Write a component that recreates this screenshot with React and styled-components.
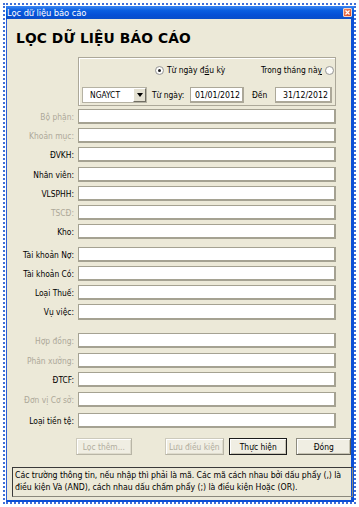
import React from 'react';
import styled, { createGlobalStyle } from 'styled-components';

const Global = createGlobalStyle`
  html, body { margin: 0; padding: 0; background: #ffffff; }
  body {
    font-family: "DejaVu Sans Condensed", "DejaVu Sans", sans-serif;
    font-size: 8.4px;
    color: #000;
  }
  #root { width: 359px; height: 507px; overflow: hidden; }
`;

const Frame = styled.div`
  margin: 3px 0 0 3px;
  width: 353px;
  height: 501px;
  box-sizing: border-box;
  border: 2px dotted #3f70d8;
  padding: 1px 0 0 1px;
  display: flex;
  flex-direction: column;
`;

const TitleBar = styled.div`
  height: 13px;
  flex: none;
  display: flex;
  align-items: center;
  justify-content: space-between;
  padding: 0 2px 0 1px;
  background: linear-gradient(to bottom, #3b86f3 0%, #0a5ee0 35%, #0550d6 70%, #0a4ec8 100%);
  color: #fff;
  font-family: "DejaVu Sans Condensed", "DejaVu Sans", sans-serif;
  font-size: 9.3px;
  letter-spacing: -0.1px;
`;

const CloseBox = styled.div`
  width: 9px;
  height: 9px;
  box-sizing: border-box;
  border: 1px solid #f3d2c4;
  border-radius: 1px;
  background: linear-gradient(135deg, #f08a66, #d9451c);
  display: flex;
  align-items: center;
  justify-content: center;
`;

const Body = styled.div`
  flex: 1;
  background: #ece9d8;
  border-left: 1px solid #2b5fd6;
  border-right: 3px solid #0b4fd6;
  border-bottom: 2px solid #0b4fd6;
  display: flex;
  flex-direction: column;
  padding: 11px 0 0 0;
`;

const Heading = styled.div`
  margin-left: 9px;
  font-family: "DejaVu Sans", sans-serif;
  font-weight: bold;
  font-size: 13.8px;
  line-height: 16px;
  letter-spacing: 0.1px;
`;

const GroupBox = styled.div`
  margin: 11px 0 0 71px;
  width: 258px;
  height: 49px;
  box-sizing: border-box;
  border: 1px solid #aca899;
  box-shadow: inset 1px 1px 0 #ffffff;
  padding: 6px 1px 0 3px;
  display: flex;
  flex-direction: column;
`;

const RadioRow = styled.div`
  display: flex;
  align-items: center;
  height: 12px;
  padding-left: 73px;
`;

const RadioItem = styled.label`
  display: flex;
  align-items: center;
  gap: 3px;
  margin-left: ${p => (p.$right ? 'auto' : '0')};
`;

const RadioDot = styled.span`
  width: 9px;
  height: 9px;
  box-sizing: border-box;
  border-radius: 50%;
  border: 1px solid #9a9a9a;
  background: radial-gradient(circle, #ffffff 50%, #e6e4dc 100%);
  display: flex;
  align-items: center;
  justify-content: center;
  &::after {
    content: '';
    width: 3px;
    height: 3px;
    border-radius: 50%;
    background: ${p => (p.$checked ? '#222' : 'transparent')};
  }
`;

const U = styled.span`
  text-decoration: underline;
`;

const DateRow = styled.div`
  display: flex;
  align-items: center;
  margin-top: 11px;
  height: 16px;
`;

const Select = styled.div`
  width: 65px;
  height: 16px;
  box-sizing: border-box;
  background: #fff;
  border: 1px solid #b5b2a3;
  display: flex;
  align-items: center;
  justify-content: space-between;
  padding-left: 7px;
`;

const DropBtn = styled.div`
  width: 13px;
  height: 14px;
  box-sizing: border-box;
  background: #e4e1d2;
  border-left: 1px solid #fff;
  border-top: 1px solid #fff;
  border-right: 1px solid #716f64;
  border-bottom: 1px solid #716f64;
  display: flex;
  align-items: center;
  justify-content: center;
  &::after {
    content: '';
    border-left: 3px solid transparent;
    border-right: 3px solid transparent;
    border-top: 4px solid #000;
  }
`;

const InlineLabel = styled.span`
  width: ${p => p.$w}px;
  margin-left: ${p => p.$ml}px;
  white-space: nowrap;
`;

const DateBox = styled.div`
  width: ${p => p.$w}px;
  height: 16px;
  box-sizing: border-box;
  background: #fff;
  border: 1px solid #aca899;
  border-right-width: 2px;
  border-bottom-width: 2px;
  display: flex;
  align-items: center;
  justify-content: flex-end;
  padding-right: 2px;
  font-size: 8.7px;
`;

const Fields = styled.div`
  display: flex;
  flex-direction: column;
  margin-top: 3px;
`;

const FieldRow = styled.div`
  display: flex;
  align-items: center;
  margin-top: ${p => p.$mt}px;
`;

const FieldLabel = styled.span`
  width: 67px;
  margin-right: 4px;
  text-align: right;
  white-space: nowrap;
  color: ${p => (p.$disabled ? '#aca899' : '#000')};
`;

const TextBox = styled.div`
  width: 258px;
  height: ${p => p.$h}px;
  box-sizing: border-box;
  background: #fff;
  border: 1px solid #a5a292;
  border-right-width: 2px;
  border-bottom-width: 2px;
`;

const ButtonRow = styled.div`
  display: flex;
  margin-top: 10px;
  padding-left: 69px;
`;

const Button = styled.div`
  width: ${p => p.$w}px;
  margin-left: ${p => p.$ml}px;
  height: 17px;
  box-sizing: border-box;
  display: flex;
  align-items: center;
  justify-content: center;
  background: #f0eee3;
  color: ${p => (p.$disabled ? '#b0ad9e' : '#000')};
  border: 1px solid ${p => (p.$primary ? '#1c1c1c' : p.$disabled ? '#cdcabc' : '#8e8c80')};
  border-right-color: ${p => (p.$primary ? '#1c1c1c' : p.$disabled ? '#b8b5a6' : '#5e5c52')};
  border-bottom-color: ${p => (p.$primary ? '#1c1c1c' : p.$disabled ? '#b8b5a6' : '#5e5c52')};
  box-shadow: inset 1px 1px 0 #ffffff, inset -1px -1px 0 ${p => (p.$disabled ? '#dedbcc' : '#c6c3b3')};
  white-space: nowrap;
`;

const Note = styled.div`
  margin: 12px 0 0 5px;
  width: 341px;
  height: 30px;
  box-sizing: border-box;
  border: 1px solid #3a3a3a;
  border-right-color: #8a887c;
  border-bottom-color: #8a887c;
  padding: 2px 0 0 2px;
  line-height: 11.5px;
  white-space: nowrap;
  font-size: 8.7px;
  letter-spacing: -0.05px;
`;

const fields = [
  { label: 'Bộ phận:', disabled: true, mt: 0 },
  { label: 'Khoản mục:', disabled: true, mt: 4 },
  { label: 'ĐVKH:', mt: 4 },
  { label: 'Nhân viên:', mt: 5 },
  { label: 'VLSPHH:', mt: 4 },
  { label: 'TSCĐ:', disabled: true, mt: 4 },
  { label: 'Kho:', mt: 4 },
  { label: 'Tài khoản Nợ:', mt: 8 },
  { label: 'Tài khoản Có:', mt: 4 },
  { label: 'Loại Thuế:', mt: 4 },
  { label: 'Vụ việc:', mt: 4, h: 16 },
  { label: 'Hợp đồng:', disabled: true, mt: 13 },
  { label: 'Phân xưởng:', disabled: true, mt: 5 },
  { label: 'ĐTCF:', mt: 4 },
  { label: 'Đơn vị Cơ sở:', disabled: true, mt: 5 },
  { label: 'Loại tiền tệ:', mt: 6 },
];

export default function App() {
  return (
    <>
      <Global />
      <Frame>
        <TitleBar>
          <span>Lọc dữ liệu báo cáo</span>
          <CloseBox>
            <svg width="5" height="5" viewBox="0 0 5 5">
              <path d="M0.5 0.5 L4.5 4.5 M4.5 0.5 L0.5 4.5" stroke="#fff" strokeWidth="1.2" />
            </svg>
          </CloseBox>
        </TitleBar>
        <Body>
          <Heading>LỌC DỮ LIỆU BÁO CÁO</Heading>
          <GroupBox>
            <RadioRow>
              <RadioItem>
                <RadioDot $checked />
                <span>Từ ngày đ<U>ầ</U>u kỳ</span>
              </RadioItem>
              <RadioItem $right>
                <span>Trong tháng nà<U>y</U></span>
                <RadioDot />
              </RadioItem>
            </RadioRow>
            <DateRow>
              <Select>
                <span>NGAYCT</span>
                <DropBtn />
              </Select>
              <InlineLabel $w={38} $ml={5}>Từ ngày:</InlineLabel>
              <DateBox $w={54}>01/01/2012</DateBox>
              <InlineLabel $w={23} $ml={8}>Đến</InlineLabel>
              <DateBox $w={57}>31/12/2012</DateBox>
            </DateRow>
          </GroupBox>
          <Fields>
            {fields.map(f => (
              <FieldRow key={f.label} $mt={f.mt}>
                <FieldLabel $disabled={f.disabled}>{f.label}</FieldLabel>
                <TextBox $h={f.h || 15} />
              </FieldRow>
            ))}
          </Fields>
          <ButtonRow>
            <Button $w={56} $ml={0} $disabled>Lọc thêm...</Button>
            <Button $w={60} $ml={33} $disabled>Lưu điều kiện</Button>
            <Button $w={59} $ml={5} $primary>Thực hiện</Button>
            <Button $w={55} $ml={9}>Đóng</Button>
          </ButtonRow>
          <Note>
            Các trường thông tin, nếu nhập thì phải là mã. Các mã cách nhau bởi dấu phẩy (,) là
            <br />
            điều kiện Và (AND), cách nhau dấu chấm phẩy (;) là điều kiện Hoặc (OR).
          </Note>
        </Body>
      </Frame>
    </>
  );
}
